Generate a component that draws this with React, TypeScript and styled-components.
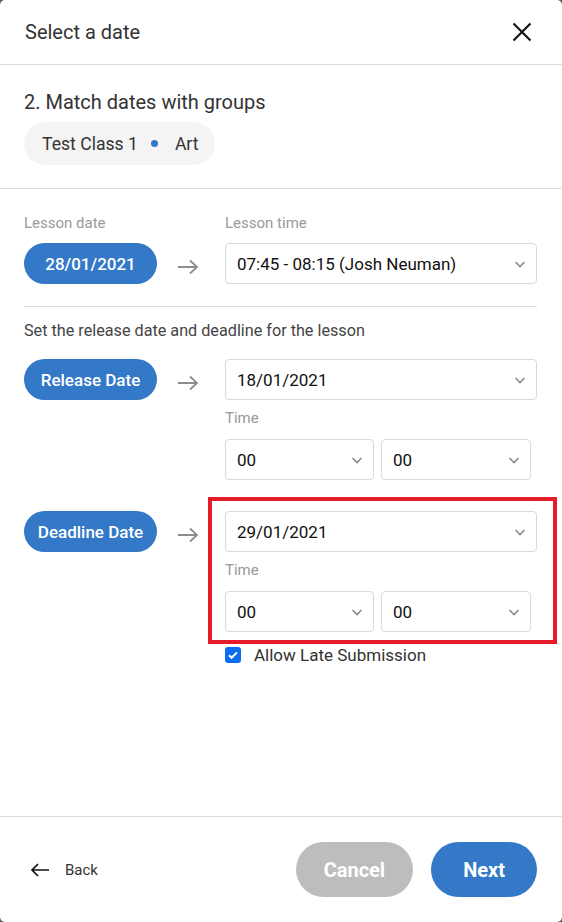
import React from "react";
import styled, { createGlobalStyle } from "styled-components";

const Global = createGlobalStyle`
  html, body { margin: 0; padding: 0; background: #5b5b5b; }
  body { font-family: Roboto, "Noto Sans", Arial, sans-serif; }
  * { box-sizing: border-box; }
`;

const Modal = styled.div`
  width: 562px;
  height: 922px;
  background: #fff;
  border-radius: 5px;
  display: flex;
  flex-direction: column;
  color: #333;
`;

const Header = styled.div`
  height: 65px;
  border-bottom: 1px solid #dcdcdc;
  display: flex;
  align-items: center;
  justify-content: space-between;
  padding: 0 28px 0 25px;
`;

const Title = styled.div`
  font-size: 20px;
  line-height: 24px;
  color: #333;
`;

const CloseBtn = styled.button`
  border: 0;
  background: none;
  padding: 0;
  width: 24px;
  height: 24px;
  display: flex;
  align-items: center;
  justify-content: center;
  cursor: pointer;
`;

const GroupSection = styled.div`
  padding: 25px 24px 23px;
  border-bottom: 1px solid #dcdcdc;
  display: flex;
  flex-direction: column;
  align-items: flex-start;
  gap: 8px;
`;

const SectionTitle = styled.div`
  font-size: 20px;
  line-height: 24px;
  color: #333;
`;

const Chip = styled.div`
  height: 43px;
  border-radius: 22px;
  background: #f4f4f4;
  display: flex;
  align-items: center;
  padding: 0 16px 0 18px;
  font-size: 17.6px;
  color: #333;
`;

const Dot = styled.span`
  width: 7px;
  height: 7px;
  border-radius: 50%;
  background: #3478c8;
  margin: 0 17px 0 13px;
`;

const Body = styled.div`
  flex: 1;
  padding: 24px 25px 0 24px;
  display: flex;
  flex-direction: column;
`;

const Row = styled.div`
  display: grid;
  grid-template-columns: 133px 68px 1fr;
  align-items: start;
`;

const FieldLabel = styled.div<{ $mt?: number }>`
  font-size: 15px;
  color: #9a9a9a;
  margin-top: ${(p) => p.$mt ?? 0}px;
  height: 20px;
  line-height: 20px;
  margin-bottom: ${(p) => (p.$mt ? 11 : 10)}px;
`;

const Pill = styled.div`
  height: 41px;
  border-radius: 21px;
  background: #3478c8;
  color: #fff;
  font-size: 17px;
  font-weight: 500;
  display: flex;
  align-items: center;
  justify-content: center;
  white-space: nowrap;
`;

const ArrowCell = styled.div`
  display: flex;
  padding: 16px 0 0 20px;
  color: #8a8a8a;
`;

const Col = styled.div`
  display: flex;
  flex-direction: column;
  position: relative;
`;

const Highlight = styled(Col)`
  &::after {
    content: "";
    position: absolute;
    left: -17px;
    top: -14px;
    right: -20px;
    bottom: -12px;
    border: 4px solid #e61b28;
    pointer-events: none;
  }
`;

const SelectBox = styled.div<{ $w?: number }>`
  height: 41px;
  width: ${(p) => (p.$w ? `${p.$w}px` : "100%")};
  border: 1px solid #d9d9d9;
  border-radius: 4px;
  display: flex;
  align-items: center;
  justify-content: space-between;
  padding: 0 9px 0 11px;
  font-size: 17px;
  color: #111;
  background: #fff;
`;

const TimeRow = styled.div`
  display: flex;
  gap: 7px;
`;

const Divider = styled.div`
  height: 1px;
  background: #dcdcdc;
  margin: 22px 0 14px;
`;

const Hint = styled.div`
  font-size: 16.2px;
  line-height: 19px;
  color: #444;
  margin-bottom: 19px;
`;

const Spacer = styled.div<{ $h: number }>`
  height: ${(p) => p.$h}px;
`;

const CheckRow = styled.label`
  display: flex;
  align-items: center;
  gap: 13px;
  font-size: 17px;
  line-height: 20px;
  color: #333;
  margin-top: 13px;
  grid-column: 3;
`;

const CheckBox = styled.span`
  width: 16px;
  height: 16px;
  border-radius: 3px;
  background: #0b6cf0;
  display: flex;
  align-items: center;
  justify-content: center;
`;

const Footer = styled.div`
  height: 106px;
  border-top: 1px solid #dcdcdc;
  display: flex;
  align-items: center;
  padding: 0 25px 0 30px;
`;

const BackBtn = styled.button`
  border: 0;
  background: none;
  display: flex;
  align-items: center;
  gap: 15px;
  padding: 0;
  font-family: inherit;
  font-size: 15px;
  color: #333;
  margin-right: auto;
`;

const ActionBtn = styled.button<{ $variant: "grey" | "blue" }>`
  height: 55px;
  border: 0;
  border-radius: 28px;
  padding: 0 ${(p) => (p.$variant === "grey" ? 28 : 32)}px;
  font-family: inherit;
  font-size: 20px;
  font-weight: 700;
  color: #fff;
  background: ${(p) => (p.$variant === "grey" ? "#bdbdbd" : "#3478c8")};
  margin-left: ${(p) => (p.$variant === "blue" ? 18 : 0)}px;
`;

const Chevron = () => (
  <svg width="14" height="14" viewBox="0 0 14 14" fill="none">
    <path d="M2.5 5l4.5 4.5L11.5 5" stroke="#8a8a8a" strokeWidth="1.6" />
  </svg>
);

const Arrow = () => (
  <svg width="22" height="16" viewBox="0 0 22 16" fill="none">
    <path d="M1 8h19M13 1.5L20 8l-7 6.5" stroke="#8c8c8c" strokeWidth="1.8" />
  </svg>
);

const Select = ({ value, w }: { value: string; w?: number }) => (
  <SelectBox $w={w}>
    <span>{value}</span>
    <Chevron />
  </SelectBox>
);

const TimeFields = () => (
  <>
    <FieldLabel $mt={8}>Time</FieldLabel>
    <TimeRow>
      <Select value="00" w={149} />
      <Select value="00" w={150} />
    </TimeRow>
  </>
);

export default function App() {
  return (
    <>
      <Global />
      <Modal>
        <Header>
          <Title>Select a date</Title>
          <CloseBtn aria-label="Close">
            <svg width="20" height="20" viewBox="0 0 20 20">
              <path d="M1.5 1.5l17 17M18.5 1.5l-17 17" stroke="#111" strokeWidth="2.2" />
            </svg>
          </CloseBtn>
        </Header>
        <GroupSection>
          <SectionTitle>2. Match dates with groups</SectionTitle>
          <Chip>
            Test Class 1<Dot />Art
          </Chip>
        </GroupSection>
        <Body>
          <Row>
            <Col>
              <FieldLabel>Lesson date</FieldLabel>
              <Pill>28/01/2021</Pill>
            </Col>
            <Col>
              <Spacer $h={30} />
              <ArrowCell>
                <Arrow />
              </ArrowCell>
            </Col>
            <Col>
              <FieldLabel>Lesson time</FieldLabel>
              <Select value="07:45 - 08:15 (Josh Neuman)" />
            </Col>
          </Row>
          <Divider />
          <Hint>Set the release date and deadline for the lesson</Hint>
          <Row>
            <Pill>Release Date</Pill>
            <ArrowCell>
              <Arrow />
            </ArrowCell>
            <Col>
              <Select value="18/01/2021" />
              <TimeFields />
            </Col>
          </Row>
          <Spacer $h={31} />
          <Row>
            <Pill>Deadline Date</Pill>
            <ArrowCell>
              <Arrow />
            </ArrowCell>
            <Highlight>
              <Select value="29/01/2021" />
              <TimeFields />
            </Highlight>
            <CheckRow>
              <CheckBox>
                <svg width="12" height="12" viewBox="0 0 12 12" fill="none">
                  <path d="M2 6.2l2.6 2.6L10 3.4" stroke="#fff" strokeWidth="2" />
                </svg>
              </CheckBox>
              Allow Late Submission
            </CheckRow>
          </Row>
        </Body>
        <Footer>
          <BackBtn>
            <svg width="20" height="14" viewBox="0 0 20 14" fill="none">
              <path d="M19 7H2M8 1L2 7l6 6" stroke="#111" strokeWidth="1.7" />
            </svg>
            Back
          </BackBtn>
          <ActionBtn $variant="grey">Cancel</ActionBtn>
          <ActionBtn $variant="blue">Next</ActionBtn>
        </Footer>
      </Modal>
    </>
  );
}
